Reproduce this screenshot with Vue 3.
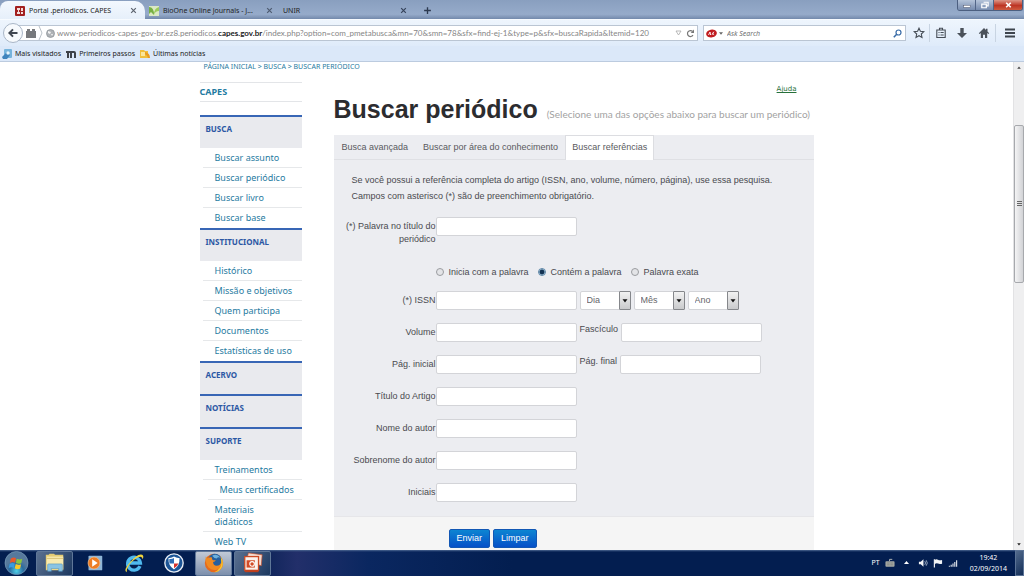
<script setup>
import { ref } from 'vue'

const url = {
  pre: 'www-periodicos-capes-gov-br.ez8.periodicos.',
  host: 'capes.gov.br',
  post: '/index.php?option=com_pmetabusca&mn=70&smn=78&sfx=find-ej-1&type=p&sfx=buscaRapida&Itemid=120'
}

const menu = [
  { title: 'BUSCA', items: ['Buscar assunto', 'Buscar periódico', 'Buscar livro', 'Buscar base'] },
  { title: 'INSTITUCIONAL', items: ['Histórico', 'Missão e objetivos', 'Quem participa', 'Documentos', 'Estatísticas de uso'] },
  { title: 'ACERVO', items: [] },
  { title: 'NOTÍCIAS', items: [] },
  { title: 'SUPORTE', items: ['Treinamentos', 'Meus certificados', 'Materiais didáticos', 'Web TV'] }
]

const match = ref('contem')
const matches = [
  { id: 'inicia', label: 'Inicia com a palavra' },
  { id: 'contem', label: 'Contém a palavra' },
  { id: 'exata', label: 'Palavra exata' }
]
const dates = ['Dia', 'Mês', 'Ano']
const pairs = [
  { id: 'volume', label: 'Volume', id2: 'fasciculo', label2: 'Fascículo' },
  { id: 'pagini', label: 'Pág. inicial', id2: 'pagfim', label2: 'Pág. final' }
]
const singles = [
  { id: 'artigo', label: 'Título do Artigo' },
  { id: 'autor', label: 'Nome do autor' },
  { id: 'sobrenome', label: 'Sobrenome do autor' },
  { id: 'iniciais', label: 'Iniciais' }
]
</script>

<template>
  <div class="screen">
    <header class="tabstrip">
      <div class="btab active">
        <svg class="fav" viewBox="0 0 10 10"><rect width="10" height="10" rx="1" fill="#a3201f" /><path d="M2 2h3v2H4v2h1v2H2V6h1V4H2zM6 2h2v3H6zM6 6h2v2H6z" fill="#f3dcd8" /></svg>
        <span class="btitle">Portal .periodicos. CAPES</span>
        <button class="x" aria-label="Fechar aba"><svg viewBox="0 0 6 6"><path d="M1 1l4 4M5 1l-4 4" stroke="#5c636d" /></svg></button>
      </div>
      <div class="btab">
        <svg class="fav" viewBox="0 0 10 10"><rect width="10" height="10" fill="#dbe9c4" /><path d="M0 1q5 0 5 8L2 6 0 8z" fill="#77b043" /><path d="M5 9q0-7 5-8v4Q6 5 5 9z" fill="#9ccb5b" /></svg>
        <span class="btitle">BioOne Online Journals - J...</span>
        <button class="x" aria-label="Fechar aba"><svg viewBox="0 0 6 6"><path d="M1 1l4 4M5 1l-4 4" stroke="#4e5b70" /></svg></button>
      </div>
      <div class="btab">
        <span class="btitle">UNIR</span>
        <button class="x" aria-label="Fechar aba"><svg viewBox="0 0 6 6"><path d="M1 1l4 4M5 1l-4 4" stroke="#36435a" /></svg></button>
      </div>
      <button class="plus" aria-label="Nova aba"><svg viewBox="0 0 8 8"><path d="M4 1v6M1 4h6" stroke="#2d3a50" stroke-width="1.2" /></svg></button>
      <div class="winbtns">
        <button aria-label="Minimizar"><svg viewBox="0 0 18 11"><rect x="6" y="6" width="7" height="2" fill="#fff" stroke="#445" stroke-width=".4" /></svg></button>
        <button aria-label="Restaurar"><svg viewBox="0 0 18 11"><path d="M8 2.500h5v4h-2M6 4.500h5v4H6z" fill="none" stroke="#fff" stroke-width="1.300" /></svg></button>
        <button class="close" aria-label="Fechar"><svg viewBox="0 0 30 11"><path d="M13 3l5 5M18 3l-5 5" stroke="#fff" stroke-width="1.800" /></svg></button>
      </div>
    </header>

    <div class="toolbar">
      <button class="back" aria-label="Voltar"><svg viewBox="0 0 20 20"><path d="M10 6l-4 4 4 4M6.500 10H15" fill="none" stroke="#3f4650" stroke-width="2.200" /></svg></button>
      <div class="urlbar">
        <svg class="brick" viewBox="0 0 10 9"><path d="M0 2h1V0h3v2h2V0h3v2h1v7H0z" fill="#77797c" /></svg>
        <svg class="chev" viewBox="0 0 5 14"><path d="M1 0l3 7-3 7" fill="none" stroke="#b9c0c8" /></svg>
        <svg class="globe" viewBox="0 0 9 9"><circle cx="4.500" cy="4.500" r="4" fill="#aeb2b6" stroke="#8b9095" stroke-width=".7" /><path d="M2 2l3 1-1 2-2-1zM5 5l2 0-1 2z" fill="#f4f4f4" /></svg>
        <span class="url">{{ url.pre }}<b>{{ url.host }}</b>{{ url.post }}</span>
        <svg class="drop" viewBox="0 0 7 6"><path d="M1 1h5L3.500 5z" fill="none" stroke="#a8a8a8" stroke-width=".8" /></svg>
        <button class="reload" aria-label="Recarregar"><svg viewBox="0 0 9 9"><path d="M7 6.200A3 3 0 1 1 6.500 2.300" fill="none" stroke="#777" stroke-width="1.200" /><path d="M8 .500v3.500H4.700z" fill="#777" /></svg></button>
      </div>
      <div class="search">
        <svg class="ask" viewBox="0 0 11 9"><ellipse cx="5.500" cy="4.500" rx="5.400" ry="3.900" transform="rotate(-12 5.500 4.500)" fill="#c01c20" /><path d="M2.500 6l1.500-3 .6 3M6 5.800l1.800-3M6.500 4.300l1.600 1.500" fill="none" stroke="#fff" stroke-width=".9" /></svg>
        <svg class="tri" viewBox="0 0 5 3"><path d="M0 0h5L2.500 3z" fill="#666" /></svg>
        <input type="text" placeholder="Ask Search" aria-label="Ask Search" />
        <svg class="lens" viewBox="0 0 9 9"><circle cx="5.500" cy="3.500" r="2.500" fill="none" stroke="#376aa6" stroke-width="1.200" /><path d="M3.700 5.300L.8 8.200" stroke="#376aa6" stroke-width="1.600" /></svg>
      </div>
      <div class="tools">
        <button aria-label="Favoritar"><svg viewBox="0 0 12 12"><path d="M6 1.200l1.400 3.100 3.400.4-2.500 2.300.7 3.400L6 8.700l-3 1.700.7-3.400L1.200 4.700l3.400-.4z" fill="none" stroke="#454c55" stroke-width="1.100" /></svg></button>
        <button class="sep" aria-label="Lista"><svg viewBox="0 0 12 12"><path d="M1.800 3h8.400v7.500H1.800zM4.500 3V1.200h3V3M3.500 5.500h1M5.500 5.500h3.200M3.500 8h1M5.500 8h3.200" fill="none" stroke="#454c55" stroke-width="1.100" /></svg></button>
        <button aria-label="Downloads"><svg viewBox="0 0 12 12"><path d="M4.300 1h3.400v5H11l-5 5-5-5h3.300z" fill="#4a515a" /></svg></button>
        <button aria-label="Início"><svg viewBox="0 0 12 12"><path d="M6 1L.8 6.200l.8.800L2.800 6v5H5V7.800h2V11h2.200V6l1.200 1 .8-.8-1.700-1.700V1.800H8V3z" fill="#4a515a" /></svg></button>
        <button class="sep" aria-label="Menu"><svg viewBox="0 0 12 12"><path d="M1 2.500h10M1 6h10M1 9.500h10" stroke="#3d444d" stroke-width="1.800" /></svg></button>
      </div>
    </div>

    <nav class="bookmarks">
      <a href="#"><svg viewBox="0 0 10 10"><rect x="2" width="8" height="9" rx="1" fill="#77b4dc" /><path d="M0 8l5-5 3 3-3 4H1z" fill="#3f83bd" /><circle cx="6" cy="4" r="1.700" fill="#e6f4fc" /></svg>Mais visitados</a>
      <a href="#"><svg viewBox="0 0 10 10"><path d="M0 2h8q2 0 2 2v5H8V4H6v5H4V4H3v5H1V4H0z" fill="#3d4249" /></svg>Primeiros passos</a>
      <a href="#"><svg viewBox="0 0 10 10"><path d="M0 1h4l1 1h3v7H0z" fill="#f0bf3c" /><path d="M3 5q4 0 5 4h2q0-5-5-6z" fill="#e99b20" /><path d="M1 3h4v4H1z" fill="#fae69a" /></svg>Últimas notícias</a>
    </nav>

    <div class="viewport">
      <div class="page">
        <div class="wrap">
          <aside class="side">
            <p class="crumb"><a href="#">PÁGINA INICIAL</a> &gt; <a href="#">BUSCA</a> &gt; <a href="#">BUSCAR PERIÓDICO</a></p>
            <a href="#" class="capes">CAPES</a>
            <section v-for="s in menu" :key="s.title">
              <h2>{{ s.title }}</h2>
              <ul v-if="s.items.length">
                <li v-for="i in s.items" :key="i" :class="{ sub: i === 'Meus certificados', narrow: i === 'Materiais didáticos' }"><a href="#">{{ i }}</a></li>
              </ul>
            </section>
          </aside>

          <main>
            <a href="#" class="help">Ajuda</a>
            <h1>Buscar periódico <small>(Selecione uma das opções abaixo para buscar um periódico)</small></h1>
            <nav class="ptabs">
              <a href="#">Busca avançada</a>
              <a href="#">Buscar por área do conhecimento</a>
              <a href="#" class="on">Buscar referências</a>
            </nav>
            <form @submit.prevent>
              <div class="fields">
                <p class="intro">Se você possui a referência completa do artigo (ISSN, ano, volume, número, página), use essa pesquisa.<br />Campos com asterisco (*) são de preenchimento obrigatório.</p>
                <div class="row first">
                  <label class="lab" for="titulo">(*) Palavra no título do periódico</label>
                  <input id="titulo" type="text" />
                </div>
                <div class="radios">
                  <label v-for="m in matches" :key="m.id"><input v-model="match" type="radio" name="match" :value="m.id" />{{ m.label }}</label>
                </div>
                <div class="row">
                  <label class="lab" for="issn">(*) ISSN</label>
                  <input id="issn" type="text" />
                  <div class="selects">
                    <span v-for="d in dates" :key="d" class="sel">
                      <select :aria-label="d"><option>{{ d }}</option></select>
                      <svg viewBox="0 0 12 19"><path d="M3 8h6L6 12z" fill="#111" /></svg>
                    </span>
                  </div>
                </div>
                <div v-for="p in pairs" :key="p.id" class="row">
                  <label class="lab" :for="p.id">{{ p.label }}</label>
                  <input :id="p.id" type="text" />
                  <label class="lab2" :for="p.id2">{{ p.label2 }}</label>
                  <input :id="p.id2" type="text" />
                </div>
                <div v-for="f in singles" :key="f.id" class="row">
                  <label class="lab" :for="f.id">{{ f.label }}</label>
                  <input :id="f.id" type="text" />
                </div>
              </div>
              <div class="actions">
                <button type="submit">Enviar</button>
                <button type="reset">Limpar</button>
              </div>
            </form>
          </main>
        </div>
      </div>
      <div class="scroll">
        <svg viewBox="0 0 11 11"><path d="M3.500 7h4L5.500 4.500z" fill="#444" /></svg>
        <i class="above"></i>
        <div class="thumb"><svg viewBox="0 0 7 7"><path d="M1 1.500h5M1 3.500h5M1 5.500h5" stroke="#666" /></svg></div>
        <i class="below"></i>
        <svg viewBox="0 0 11 11"><path d="M3.500 4h4L5.500 6.500z" fill="#222" /></svg>
      </div>
    </div>

    <footer class="taskbar">
      <button class="start" aria-label="Iniciar"><svg viewBox="0 0 26 25"><defs><radialGradient id="orb" cy=".85"><stop offset="0" stop-color="#4fd0e8" /><stop offset=".6" stop-color="#2b6c9f" /><stop offset="1" stop-color="#56799c" /></radialGradient></defs><circle cx="13" cy="12.500" r="12" fill="url(#orb)" stroke="#86a7c4" stroke-width=".6" /><path d="M7 8q3-2 5.500-.4l-1 4.600q-2.500-1.400-5.400.2z" fill="#e8592a" /><path d="M13.300 8q2.700 1.500 5.700.2l-1 4.600q-3 1.300-5.600-.2z" fill="#8cc63e" /><path d="M5.900 13.300q3-1.600 5.400-.2l-1 4.500q-2.400-1.500-5.400 0z" fill="#3a9be0" /><path d="M12.200 13.600q2.600 1.500 5.600.2l-1 4.500q-3 1.300-5.600-.3z" fill="#fbc928" /></svg></button>
      <button class="app open" aria-label="Explorador"><svg viewBox="0 0 24 24"><path d="M2 3h3l1-1h5l1 1h9v17H2z" fill="#e4cc74" /><path d="M3 5h18v14H3z" fill="#f8eab0" /><path d="M3 7h18" stroke="#c9ad54" stroke-width=".7" /><path d="M4 21v-7q0-1 1-1h14q1 0 1 1v7h-4v-3H8v3z" fill="#8bc4e4" stroke="#4c8fba" stroke-width=".6" /></svg></button>
      <button class="app" aria-label="Media Player"><svg viewBox="0 0 24 24"><rect x="6" y="4" width="15" height="16" rx="1" fill="#8fb5d6" /><circle cx="12" cy="12" r="6.500" fill="#ee7d24" stroke="#f8c08c" stroke-width=".7" /><path d="M10 8l6 4-6 4z" fill="#fff" /></svg></button>
      <button class="app" aria-label="Internet Explorer"><svg viewBox="0 0 24 24"><path d="M18.500 15.500A7 7 0 1 1 19 12H7" fill="none" stroke="#4fb9ee" stroke-width="3.600" /><path d="M4 22q-4-2 3-10Q16 1 21 3q2 1 .5 5Q21 3 14 7 4 14 4 22z" fill="#f1d53e" /></svg></button>
      <button class="app" aria-label="Segurança"><svg viewBox="0 0 24 24"><circle cx="12" cy="12" r="10" fill="#1c5597" stroke="#e8edf4" stroke-width="1.500" /><path d="M12 5q3 2 6 1.500Q18.500 15 12 19 5.500 15 6 6.500 9 7 12 5z" fill="#fff" /><path d="M12 6.500v6H7.200q-.5-2-.3-5Q9.500 8 12 6.500z" fill="#2d6cb5" /><path d="M12 12.500h4.800Q15.500 16 12 17.800z" fill="#d8322c" /></svg></button>
      <button class="app open current" aria-label="Firefox"><svg viewBox="0 0 24 24"><circle cx="12" cy="12" r="10" fill="#e66a1c" /><circle cx="13" cy="9.500" r="7.500" fill="#265f9e" /><path d="M10 4q5-3 9 2-3-1-4 1-3 0-5-3z" fill="#6eb1dc" /><path d="M3 5l2 2q2-2 5-1-1 2 1 3h3q-1 2-3 2 0 4 4 4t5-4q1 6-4 8-6 2-10-2-4-5-3-12z" fill="#f08a22" /><path d="M19 5q4 5 2 11-3 6-9 6 8-3 8-10 0-4-1-7z" fill="#f7c52f" /></svg></button>
      <button class="app open" aria-label="PowerPoint"><svg viewBox="0 0 24 24"><path d="M7 1l15 2-1 12-3-1V6L6 5z" fill="#f4d9cd" stroke="#c9502c" stroke-width=".7" /><rect x="3" y="5" width="15" height="15" fill="#fbf2ed" stroke="#cd4a23" stroke-width="1.400" /><path d="M5 9h9v8H5z" fill="#d24a25" /><circle cx="11" cy="13" r="2.500" fill="none" stroke="#fff" stroke-width="1.200" /><path d="M3 20h15v2H3z" fill="#bd3f1d" /></svg></button>
      <div class="tray">
        <span class="lang">PT</span>
        <svg class="kbd" viewBox="0 0 11 10"><path d="M5 3V1h3" fill="none" stroke="#b9bdb9" /><rect x=".5" y="3" width="10" height="6" rx="1" fill="#a5a9a4" /><path d="M2 5h7M2 7h7" stroke="#6b706e" stroke-width=".8" stroke-dasharray="1 .5" /></svg>
        <svg class="up" viewBox="0 0 5 4"><path d="M0 3h5L2.500 0z" fill="#fff" /></svg>
        <svg class="ico" viewBox="0 0 11 10"><path d="M1 3.500h2L6 1v8L3 6.500H1z" fill="#f2f4f6" /><path d="M7.500 3q1.500 2 0 4M9 2q2.500 3 0 6" fill="none" stroke="#cdd7e4" stroke-width=".8" /></svg>
        <svg class="ico" viewBox="0 0 11 10"><path d="M1.500 1v9" stroke="#fff" stroke-width="1.200" /><path d="M2 1.500q2-1 3.500 0t4.500.300v4q-3 .7-4.500-.2T2 6z" fill="#f1f4f7" /></svg>
        <svg class="ico" viewBox="0 0 11 10"><path d="M1.500 9V8M3.500 9V7M5.500 9V5.500M7.500 9V4M9.500 9V2" stroke="#e9edf2" stroke-width="1.200" /></svg>
        <time class="clock">19:42<br />02/09/2014</time>
        <button class="desk" aria-label="Mostrar área de trabalho"></button>
      </div>
    </footer>
  </div>
</template>

<style>
body { margin: 0; overflow: hidden; }
</style>

<style scoped>
* { box-sizing: border-box; }
.screen { height: 100vh; display: flex; flex-direction: column; background: #fff; font: 7px/10px "Noto Sans", "Open Sans", sans-serif; color: #222; overflow: hidden; }
button { border: 0; padding: 0; margin: 0; background: none; font: inherit; color: inherit; flex: none; }
svg { display: block; flex: none; }
a { text-decoration: none; color: inherit; }

.tabstrip { height: 19px; flex: none; display: flex; align-items: stretch; background: linear-gradient(#899fbf, #96abca 75%, #7389ab); }
.btab { width: 134px; display: flex; align-items: center; gap: 4px; padding: 2px 6px 0 4px; white-space: nowrap; }
.btab.active { width: 145px; margin-top: 1px; padding: 1px 8px 0 15px; background: linear-gradient(#f3f8fe, #e6effa); border-radius: 8px 10px 0 0; }
.btitle { flex: 1; }
.fav { width: 10px; height: 10px; }
.x svg { width: 7px; height: 7px; }
.plus { width: 28px; padding-top: 2px; display: flex; justify-content: center; align-items: center; }
.plus svg { width: 9px; height: 9px; }
.winbtns { margin-left: auto; height: 11px; display: flex; margin-right: 1px; border: solid #4c5f80; border-width: 0 1px 1px; border-radius: 0 0 3px 3px; overflow: hidden; }
.winbtns button { width: 18px; background: linear-gradient(#b4c3d9, #768bae); border-right: 1px solid #526587; }
.winbtns .close { width: 28px; background: linear-gradient(#dd9687, #bd3524 55%, #cf5b40); border: 0; }
.winbtns svg { width: 100%; height: 10px; }

.toolbar { height: 27px; flex: none; display: flex; align-items: center; padding: 0 0 0 3px; background: linear-gradient(#eef5fd, #dfebfa); border-top: 1px solid #f7fbff; }
.back { width: 20px; height: 20px; border: 1px solid #a9b6c7; border-radius: 50%; background: #f7fafd; z-index: 1; }
.back svg { width: 18px; height: 18px; }
.urlbar { flex: 1; min-width: 0; height: 16px; margin-left: -4px; margin-right: 5px; padding: 0 2px 0 6px; display: flex; align-items: center; background: #fff; border: 1px solid #bac5d3; }
.brick { width: 10px; height: 9px; }
.chev { width: 5px; height: 14px; margin: 0 3px 0 2px; }
.globe { width: 9px; height: 9px; margin-right: 2px; }
.url { flex: 1; min-width: 0; overflow: hidden; white-space: nowrap; font: 8px/12px Lato, sans-serif; color: #858585; }
.url b { color: #222; }
.drop { width: 7px; height: 6px; margin-right: 4px; }
.reload svg { width: 9px; height: 9px; }
.search { flex: none; width: 203px; height: 16px; padding: 0 3px 0 2px; display: flex; align-items: center; gap: 2px; background: #fff; border: 1px solid #bac5d3; }
.ask { width: 11px; height: 9px; }
.tri { width: 4px; height: 3px; }
.search input { flex: 1; min-width: 0; height: 12px; border: 0; padding: 0 0 0 2px; background: none; font: italic 8px/12px Lato, sans-serif; outline: 0; }
.search input::placeholder { color: #707070; font-style: italic; }
.lens { width: 9px; height: 9px; }
.tools { display: flex; margin-left: 3px; }
.tools button { width: 22px; height: 18px; display: flex; align-items: center; justify-content: center; }
.tools button:first-child { width: 20px; }
.tools button.sep { border-left: 1px solid #c8d4e2; }
.tools button:last-child { width: 29px; }
.tools svg { width: 12px; height: 12px; }

.bookmarks { height: 16px; flex: none; display: flex; align-items: center; gap: 5px; padding: 0 2px; background: #dbe8f9; border-bottom: 1px solid #bccbdf; }
.bookmarks a { display: flex; align-items: center; gap: 3px; white-space: nowrap; }
.bookmarks svg { width: 10px; height: 10px; }

.viewport { flex: 1; min-height: 0; display: flex; }
.page { flex: 1; min-width: 0; overflow: hidden; }
.wrap { max-width: 614px; margin: 0 auto; display: flex; align-items: flex-start; gap: 32px; }
.side { width: 102px; flex: none; font: 9px/12px "Noto Sans", "Open Sans", sans-serif; color: #1f7ba1; }
.crumb { margin: 0 0 12px 4px; height: 8px; font-size: 7px; line-height: 9px; white-space: nowrap; }
.capes { display: block; height: 20px; margin-bottom: 13px; border: solid #e3e5e8; border-width: 1px 0; line-height: 18px; font-weight: 700; }
h2 { margin: 0; height: 33px; padding: 6px 6px 0; border-top: 2px solid #3866b5; background: #e9eaee; color: #2c58a4; font-size: 8px; line-height: 12px; font-weight: 700; }
ul { margin: 0; padding: 0; list-style: none; }
li { margin-left: 3px; padding: 4px 0 3px 12px; border-bottom: 1px solid #e6e8ea; }
li:last-child { border-bottom-color: transparent; }
li.sub { margin-left: 8px; }
li.narrow { padding-right: 30px; }

main { flex: 1; min-width: 0; padding-top: 22px; font: 9px/13px "Liberation Sans", Arial, sans-serif; color: #4a4a4f; }
.help { display: block; width: fit-content; margin: 0 17px 0 auto; font: 7px/10px "DejaVu Sans", sans-serif; color: #27703a; text-decoration: underline; }
h1 { margin: 0; height: 41px; line-height: 31px; font-size: 25px; color: #2c2c2f; white-space: nowrap; }
small { margin-left: 2px; font: 10px Lato, sans-serif; color: #a2a2a2; }
.ptabs { height: 25px; display: flex; background: #ecedf1; border-bottom: 1px solid #dfe0e4; }
.ptabs a { padding: 0 7px 0 8px; line-height: 24px; color: #5a5a5e; }
.ptabs a.on { height: 25px; padding: 0 6px; background: #fff; border: solid #dcdde1; border-width: 1px 1px 0; line-height: 22px; }
.fields { background: #ecedf1; padding: 12px 10px 1px; }
.intro { margin: 0 0 13px 8px; line-height: 16px; white-space: nowrap; }
.row { display: flex; align-items: flex-start; margin-bottom: 13px; height: 19px; }
.row.first { height: 32px; }
.lab { width: 92px; flex: none; text-align: right; padding-top: 3px; }
input[type="text"] { font: inherit; }
.row input { width: 141px; height: 19px; padding: 0 4px; border: 1px solid #d3d4d8; border-radius: 2px; background: #fff; outline: 0; }
.lab2 { margin: 0 3px; white-space: nowrap; }
.radios { display: flex; gap: 9px; height: 13px; padding-top: 1px; margin: 16px 0 13px 92px; }
.radios label { display: flex; align-items: center; gap: 5px; white-space: nowrap; }
.radios input { appearance: none; width: 8px; height: 8px; margin: 0; border: 1px solid #9a9ca0; border-radius: 50%; background: #e3e4e7; }
.radios input:checked { border-color: #5b84a5; background: radial-gradient(#123253 0 2px, #b9d9ee 3px); }
.selects { display: flex; gap: 3px; margin-left: 3px; }
.sel { position: relative; width: 51px; height: 19px; }
select { appearance: none; width: 100%; height: 19px; padding: 0 14px 0 6px; border: 1px solid #d3d4d8; border-radius: 2px; background: #fff; color: #66666a; font: inherit; }
.sel svg { position: absolute; right: 0; top: 0; width: 12px; height: 19px; border: 1px solid #85878b; border-radius: 1px; background: linear-gradient(#f2f2f2, #c9cacc); pointer-events: none; }
.actions { display: flex; gap: 3px; padding: 12px 0 12px 115px; background: #f5f5f5; border-top: 1px solid #e6e6e9; }
.actions button { height: 19px; padding: 0 7px; border: 1px solid #1257b4; border-radius: 2px; background: linear-gradient(#0d85d2, #0650c8); color: #fff; }

.scroll { width: 11px; flex: none; display: flex; flex-direction: column; background: #efeff0; border-left: 1px solid #e2e2e4; }
.scroll > svg { width: 10px; height: 11px; }
.above { flex: 52; }
.thumb { flex: 157; display: flex; align-items: center; justify-content: center; background: linear-gradient(90deg, #f4f4f5, #d2d3d6); border: 1px solid #a7a9ad; border-radius: 2px; }
.thumb svg { width: 7px; height: 7px; }
.below { flex: 258; }

.taskbar { height: 26px; flex: none; display: flex; align-items: center; background: linear-gradient(#4a6590, transparent 2px), linear-gradient(90deg, #031e50 24%, #222f6a 29%, #0a2760 36%, #031e50 50%); color: #fff; }
.start { margin: 0 7px 0 4px; }
.start svg { width: 25px; height: 24px; }
.app { width: 38px; height: 25px; margin-right: 2px; display: flex; align-items: center; justify-content: center; }
.app svg { width: 22px; height: 22px; }
.app.open { width: 37px; border: 1px solid #5f7798; border-radius: 2px; background: linear-gradient(120deg, #5a7090, #1c3860); }
.app.current { background: linear-gradient(#c2cad6, #7c8fac); }
.tray { margin-left: auto; display: flex; align-items: center; gap: 5px; height: 100%; }
.kbd { width: 10px; height: 10px; margin-right: 4px; }
.up { width: 5px; height: 4px; margin-right: 4px; }
.ico { width: 10px; height: 10px; }
.clock { line-height: 11px; text-align: center; margin: 0 3px 0 7px; }
.desk { width: 9px; height: 26px; border: 1px solid #5b7396; background: linear-gradient(135deg, #526a8c, #132e58); }
</style>
